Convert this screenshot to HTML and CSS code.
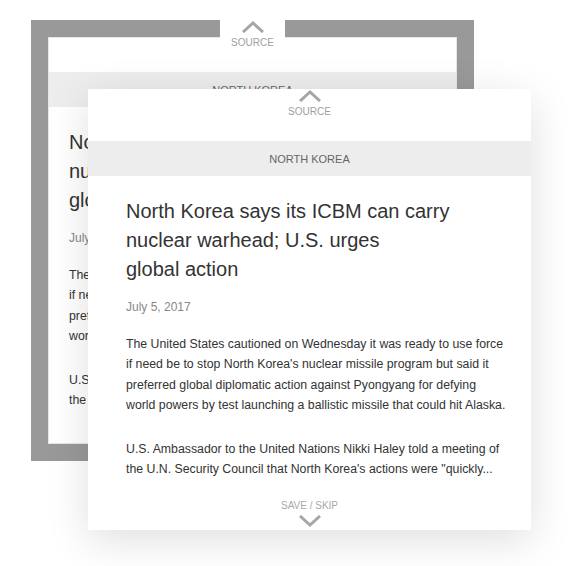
FILE: index.html
```html
<!DOCTYPE html>
<html>
<head>
<meta charset="utf-8">
<link rel="stylesheet" href="styles.css">
</head>
<body>
<div class="stage">
  <div class="card card-back">
    <div class="source">
      <svg class="chev" viewBox="0 0 24 12" width="24" height="12"><path d="M2 11 L12 2 L22 11" fill="none" stroke="#a6a6a6" stroke-width="3"/></svg>
      <span class="source-label">SOURCE</span>
    </div>
    <div class="band">NORTH KOREA</div>
    <div class="content">
      <h1 class="title">North Korea says its ICBM can carry<br>nuclear warhead; U.S. urges<br>global action</h1>
      <div class="date">July 5, 2017</div>
      <p class="para">The United States cautioned on Wednesday it was ready to use force<br>if need be to stop North Korea's nuclear missile program but said it<br>preferred global diplomatic action against Pyongyang for defying<br>world powers by test launching a ballistic missile that could hit Alaska.</p>
      <p class="para">U.S. Ambassador to the United Nations Nikki Haley told a meeting of<br>the U.N. Security Council that North Korea's actions were "quickly...</p>
    </div>
    <div class="frame"></div>
  </div>

  <div class="card card-front">
    <div class="source">
      <svg class="chev" viewBox="0 0 24 12" width="24" height="12"><path d="M2 11 L12 2 L22 11" fill="none" stroke="#a6a6a6" stroke-width="3"/></svg>
      <span class="source-label">SOURCE</span>
    </div>
    <div class="band">NORTH KOREA</div>
    <div class="content">
      <h1 class="title">North Korea says its ICBM can carry<br>nuclear warhead; U.S. urges<br>global action</h1>
      <div class="date">July 5, 2017</div>
      <p class="para">The United States cautioned on Wednesday it was ready to use force<br>if need be to stop North Korea's nuclear missile program but said it<br>preferred global diplomatic action against Pyongyang for defying<br>world powers by test launching a ballistic missile that could hit Alaska.</p>
      <p class="para">U.S. Ambassador to the United Nations Nikki Haley told a meeting of<br>the U.N. Security Council that North Korea's actions were "quickly...</p>
    </div>
    <div class="footer">
      <span class="footer-label">SAVE / SKIP</span>
      <svg class="chev" viewBox="0 0 24 12" width="24" height="12"><path d="M2 1 L12 10 L22 1" fill="none" stroke="#a6a6a6" stroke-width="3"/></svg>
    </div>
  </div>
</div>
</body>
</html>
```

FILE: styles.css
```css
* { box-sizing: border-box; }
html, body {
  margin: 0;
  padding: 0;
  background: #fff;
}
body {
  font-family: "Liberation Sans", Arial, sans-serif;
  color: #333;
}
.stage {
  position: relative;
  width: 576px;
  height: 566px;
  overflow: hidden;
}
.card {
  position: absolute;
  width: 443px;
  height: 441px;
  background: #fff;
  display: flex;
  flex-direction: column;
  overflow: hidden;
}
.card > * {
  flex-shrink: 0;
}
.card-back {
  left: 31px;
  top: 20px;
  z-index: 1;
}
.card-front {
  left: 88px;
  top: 89px;
  z-index: 2;
  box-shadow: 0 10px 40px rgba(0, 0, 0, 0.13);
}
.frame {
  position: absolute;
  inset: 0;
  border: 17px solid #999;
  box-shadow: inset 0 0 0 1px #e6e6e6;
  z-index: 1;
}
.source {
  position: relative;
  z-index: 2;
  align-self: center;
  width: 65px;
  height: 29px;
  background: #fff;
  display: flex;
  flex-direction: column;
  align-items: center;
  padding-top: 1px;
}
.chev {
  display: block;
}
.source-label {
  font-size: 10px;
  line-height: 12px;
  color: #a0a0a0;
  margin-top: 4px;
}
.band {
  margin-top: 23px;
  height: 35px;
  background: #ededed;
  display: flex;
  align-items: center;
  justify-content: center;
  font-size: 11px;
  color: #666;
}
.content {
  padding: 0 8px 0 38px;
}
.title {
  margin: 21px 0 0;
  font-size: 20px;
  line-height: 29px;
  font-weight: normal;
  color: #333;
  white-space: nowrap;
}
.date {
  margin-top: 15px;
  font-size: 12px;
  line-height: 16px;
  color: #888;
}
.para {
  margin: 19px 0 0;
  font-size: 12.3px;
  line-height: 20.3px;
  color: #333;
  white-space: nowrap;
}
.para + .para {
  margin-top: 23.6px;
}
.footer {
  margin-top: auto;
  display: flex;
  flex-direction: column;
  align-items: center;
  padding-bottom: 3px;
}
.footer-label {
  font-size: 10px;
  line-height: 12px;
  color: #a8a8a8;
  margin-bottom: 3px;
}
```
